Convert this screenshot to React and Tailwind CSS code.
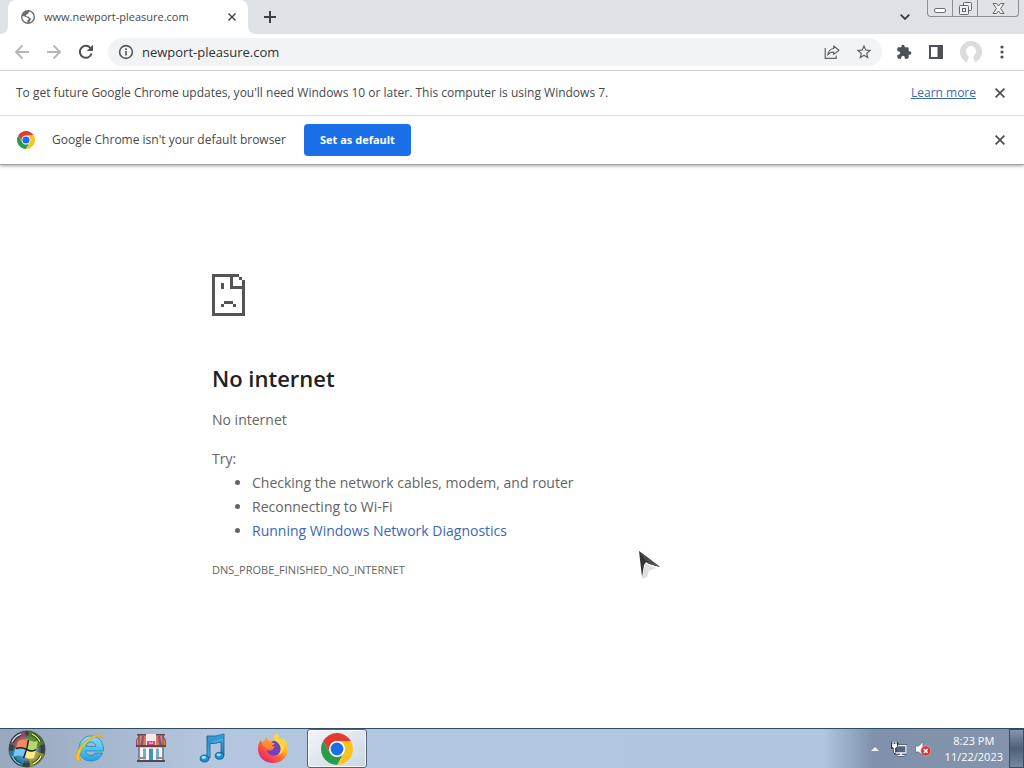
import React, { useState } from "react";

const ChromeLogo = ({ className }) => (
  <svg viewBox="4 4 40 40" className={className} aria-hidden="true">
    <circle cx="24" cy="24" r="11" fill="#fff" />
    <path d="M24 14H41.32A20 20 0 0 0 6.68 14L15.34 29A10 10 0 0 1 24 14z" fill="#e33b2e" />
    <path d="M15.34 29L6.68 14A20 20 0 0 0 24 44L32.66 29A10 10 0 0 1 15.34 29z" fill="#2a9b4b" />
    <path d="M32.66 29L24 44A20 20 0 0 0 41.32 14H24A10 10 0 0 1 32.66 29z" fill="#fcc31e" />
    <circle cx="24" cy="24" r="8" fill="#1a6fe8" />
  </svg>
);

const CloseIcon = ({ className }) => (
  <svg viewBox="0 0 10 10" className={className} fill="none" stroke="currentColor" strokeWidth="1.7" aria-hidden="true">
    <path d="M0.6 0.6L9.4 9.4M9.4 0.6L0.6 9.4" />
  </svg>
);

const GlobeIcon = () => (
  <svg viewBox="0 0 24 24" className="size-4 shrink-0" aria-hidden="true">
    <path
      fill="#6b6f73"
      d="M12 1.500a10.500 10.500 0 1 0 0 21 10.500 10.500 0 0 0 0-21zM10.900 20.200C6.800 19.700 3.700 16.200 3.700 12c0-.6.1-1 .2-1.500 2 .3 4 .8 5.500 2 1 .8 3 .5 3.600 2 .4 1.300-1.100 1.700-1.600 2.500-.5.900-.2 2-.5 3.200zM14 20c.2-1.500 1-2.500 2.200-3.500 1-1 .3-2.300-.7-2.800-1.500-.7-1.500-2-3-2.300-1.300-.3-2.700 0-3.500-1.200-.6-1.200 1-1.700 2-2.200 1.200-.6 1-2 2-2.800.5-.5 1.500-.6 2-1 3 1.300 5.300 4.300 5.300 7.800 0 4-2.700 7.200-6.300 8z"
    />
  </svg>
);

const BackIcon = () => (
  <svg viewBox="0 0 16 16" className="size-4" fill="none" stroke="#b4b7ba" strokeWidth="1.8" aria-hidden="true">
    <path d="M15 8H2M8.500 1.500L2 8l6.500 6.500" />
  </svg>
);

const ForwardIcon = () => (
  <svg viewBox="0 0 16 16" className="size-4" fill="none" stroke="#b4b7ba" strokeWidth="1.8" aria-hidden="true">
    <path d="M1 8h13M7.500 1.500L14 8l-6.500 6.500" />
  </svg>
);

const ReloadIcon = () => (
  <svg viewBox="0 0 16 16" className="size-4" aria-hidden="true">
    <path d="M13.600 9.500A6 6 0 1 1 12.400 3.900" fill="none" stroke="#4d5156" strokeWidth="2" />
    <path d="M15 0.800V7H8.800z" fill="#4d5156" />
  </svg>
);

const InfoIcon = () => (
  <svg viewBox="0 0 16 16" className="size-4 shrink-0" fill="none" stroke="#54585c" strokeWidth="1.6" aria-hidden="true">
    <circle cx="8" cy="8" r="6.400" />
    <path d="M8 7v4.600M8 4.300v1.700" />
  </svg>
);

const ShareIcon = () => (
  <svg viewBox="0 0 16 16" className="size-4" fill="none" stroke="#5f6368" strokeWidth="1.2" aria-hidden="true">
    <path d="M1.200 4v10.400h11V11.500" />
    <path d="M9.700 2l5.300 4.200-5.300 4.200V8C7 8 5.200 8.700 3.700 11 4.200 7.600 6 5 9.700 4.500z" strokeLinejoin="round" />
  </svg>
);

const StarIcon = () => (
  <svg viewBox="0 0 24 24" className="size-[18px]" fill="#5f6368" aria-hidden="true">
    <path d="M22 9.240l-7.190-.62L12 2 9.190 8.630 2 9.240l5.460 4.730L5.820 21 12 17.270 18.180 21l-1.630-7.030L22 9.240zM12 15.400l-3.760 2.270 1-4.280-3.320-2.880 4.380-.38L12 6.100l1.710 4.040 4.380.38-3.320 2.880 1 4.280L12 15.400z" />
  </svg>
);

const PuzzleIcon = () => (
  <svg viewBox="0 0 24 24" className="size-4" fill="#4d5156" aria-hidden="true">
    <path d="M20.500 11H19V7c0-1.100-.9-2-2-2h-4V3.500a2.500 2.500 0 0 0-5 0V5H4c-1.100 0-2 .9-2 2v3.800h1.500a2.700 2.700 0 0 1 0 5.400H2V20c0 1.100.9 2 2 2h3.800v-1.500a2.700 2.700 0 0 1 5.400 0V22H17c1.100 0 2-.9 2-2v-4h1.500a2.500 2.500 0 0 0 0-5z" />
  </svg>
);

const SidePanelIcon = () => (
  <svg viewBox="0 0 16 16" className="size-4" aria-hidden="true">
    <path fill="#4d5156" fillRule="evenodd" d="M1 1h14v14H1zM3 3v10h6.500V3z" />
  </svg>
);

const SadPageIcon = () => (
  <svg viewBox="0 0 11 14" className="h-[42px] w-[33px]" fill="#545454" shapeRendering="crispEdges" aria-hidden="true">
    <path d="M0 0H9V1H7V4H11V14H0zM1 1V13H10V5H6V1z" fillRule="evenodd" />
    <path d="M9 1h1v1H9zM10 2h1v3h-1z" />
    <path d="M3 3h1v2H3zM4 9h3v1H4zM3 10h1v1H3zM7 10h1v1H7z" />
  </svg>
);

const StartOrb = () => (
  <svg viewBox="0 0 40 40" className="size-10" aria-hidden="true">
    <defs>
      <radialGradient id="orb" cx="50%" cy="50%" r="50%">
        <stop offset="0" stopColor="#fffef0" />
        <stop offset="0.450" stopColor="#8faaa5" />
        <stop offset="0.800" stopColor="#2c4038" />
        <stop offset="1" stopColor="#3f4a56" />
      </radialGradient>
    </defs>
    <circle cx="20" cy="20" r="18.500" fill="url(#orb)" />
    <path d="M3 15A18 18 0 0 1 18 2L19 11 8 17z" fill="#b8506c" opacity="0.700" />
    <path d="M22 2a18 18 0 0 1 15 13l-8 3-8-8z" fill="#5f9420" opacity="0.700" />
    <path d="M2 22a18 18 0 0 0 13 15l4-8-9-8z" fill="#2a93d2" opacity="0.700" />
    <path d="M23 38a18 18 0 0 0 14-13l-9-3-6 7z" fill="#b8b030" opacity="0.700" />
    <path d="M5 13q3-6 9-8M25 5q6 3 8 8M5 27q3 6 8 8M26 35q6-3 8-8" fill="none" stroke="#14201c" strokeWidth="3" />
    <path d="M5 13q3-6 9-8" fill="none" stroke="#c8e6ea" strokeWidth="1.500" />
    <path d="M25 5q6 3 8 8" fill="none" stroke="#c4e86a" strokeWidth="1.500" />
    <path d="M5 27q3 6 8 8" fill="none" stroke="#6fd0f7" strokeWidth="1.500" />
    <path d="M26 35q6-3 8-8" fill="none" stroke="#f6f2a8" strokeWidth="1.500" />
    <path d="M11 12q5-3 10-1l-2 8q-5-2-10 0z" fill="#f08a58" />
    <path d="M22 11q5 3 9 1l-2 8q-4 2-9-1z" fill="#b4d86a" />
    <path d="M8 20q5-3 11 0l-2 8q-6-3-11 0z" fill="#79c6f2" />
    <path d="M20 21q5 3 9 0l-2 8q-5 2-9-1z" fill="#ffe985" />
    <path d="M21.500 11q-1 9-5 18M9 19.500q6-2 11 1t9 0" fill="none" stroke="#1b201c" strokeWidth="1.500" />
  </svg>
);

const ExplorerIcon = () => (
  <svg viewBox="0 0 32 32" className="size-8" aria-hidden="true">
    <defs>
      <linearGradient id="ie" x1="0" y1="0" x2="0" y2="1">
        <stop offset="0" stopColor="#8fe0fb" />
        <stop offset="0.5" stopColor="#4fc3f0" />
        <stop offset="1" stopColor="#2a9fdc" />
      </linearGradient>
    </defs>
    <path
      d="M17 4C10 4 5 9.500 5 17s5 12 12 12c5.500 0 9.800-3 11.500-8h-7.500c-1 1.500-2.200 2.300-4 2.300-3 0-5-1.800-5.200-4.300H29.500C30 10.500 25 4 17 4zM12 14.500c.5-2.700 2.400-4.500 5-4.500s4.600 1.800 4.900 4.500z"
      fill="url(#ie)"
      stroke="#2489bd"
      strokeWidth="0.800"
    />
    <path
      d="M28.500 6.500C29 1.500 22 1.500 15 6.500 7 12 1 21 2 27c.5 2 3.500 2.500 6 1-2.500 0-3.500-1.500-2.500-4.500C7 17 12 10.500 18 6.800c5-3 9-3.600 10.500-.3z"
      fill="#f4c52c"
      stroke="#c89a1c"
      strokeWidth="0.500"
    />
  </svg>
);

const StoreIcon = () => (
  <svg viewBox="0 0 32 32" className="size-8" aria-hidden="true">
    <path d="M4 13h24v15H4z" fill="#c3ccd6" />
    <path d="M2 2h28v1.500H2zM1 13h30v2H1z" fill="#5d4650" />
    <path d="M2 28h28v2H2z" fill="#4f4a52" />
    <path d="M4 3.500h7V13H1V8zM21 3.500h7L31 8v5H21z" fill="#8b4f86" />
    <path d="M5 4h2L5.500 13H2V8zM25 4h2l3 5v4h-3z" fill="#e08a45" />
    <path d="M9 4h2v9H8zM21 4h2l1 9h-3z" fill="#d77a52" />
    <path d="M11 2h10v11H11z" fill="#f3ebee" />
    <path d="M12 9h8v4h-8z" fill="#d1457c" />
    <path d="M14 9l2 2 2-2v3h-4z" fill="#f3a6c2" />
    <path d="M5 16h3v12H5zM11 16h3v12h-3zM18 16h3v12h-3zM24 16h3v12h-3z" fill="#f4f6f8" />
    <path d="M8 17h3v8H8zM21 17h3v8h-3z" fill="#7ba9c8" />
    <path d="M14 17h4v11h-4z" fill="#3f92c4" />
    <path d="M5 25h6v2H5zM21 25h6v2h-6z" fill="#8f8a8c" />
    <path d="M4 3v25M28 3v25" stroke="#5a4f5c" strokeWidth="1" />
  </svg>
);

const MusicIcon = () => (
  <svg viewBox="0 0 32 32" className="size-8" aria-hidden="true">
    <defs>
      <linearGradient id="note" x1="0" y1="0" x2="1" y2="1">
        <stop offset="0" stopColor="#1c7fbe" />
        <stop offset="0.5" stopColor="#46aee2" />
        <stop offset="1" stopColor="#1374b8" />
      </linearGradient>
    </defs>
    <path d="M11 4q9 1 17-2V23h-3V10q-6 2-11 1.500V26h-3z" fill="url(#note)" stroke="#12608f" strokeWidth="0.800" />
    <path d="M12 5q8 .8 15-1.500v3q-7 2.500-15 2z" fill="#2f9ad3" />
    <ellipse cx="8.500" cy="26.500" rx="4.300" ry="3.500" fill="#1d8fd2" stroke="#12557f" strokeWidth="0.800" />
    <ellipse cx="23.500" cy="23.800" rx="4.300" ry="3.500" fill="#1d8fd2" stroke="#12557f" strokeWidth="0.800" />
    <ellipse cx="7.800" cy="25.500" rx="2.200" ry="1.400" fill="#a6e6fb" />
    <ellipse cx="22.800" cy="22.800" rx="2.200" ry="1.400" fill="#a6e6fb" />
  </svg>
);

const FirefoxIcon = () => (
  <svg viewBox="0 0 32 32" className="size-8" aria-hidden="true">
    <defs>
      <linearGradient id="fox" x1="0.850" y1="0.100" x2="0.200" y2="0.900">
        <stop offset="0" stopColor="#ffe94a" />
        <stop offset="0.350" stopColor="#ffb02a" />
        <stop offset="0.650" stopColor="#ff5f3a" />
        <stop offset="1" stopColor="#e5296f" />
      </linearGradient>
    </defs>
    <path
      d="M20 1c1 3.500 3 5 5 7 1-.2 1-1 .8-2C29 9 31 13 31 17c0 8-6.500 14-15 14S1 25 1 17c0-4 1-7 3-9.500L5 11c1-1.500 2-2.200 3-2.500V5.500c1.500.5 3 1.500 4 3 2-.3 4 0 5 1C17 6 18 3 20 1z"
      fill="url(#fox)"
    />
    <path d="M17 9c4 0 7 3 7 7.500 0 4-3 7-7 7s-7-2.500-7-5.500c2 1 5 1 6-1 .5-1 1.500-1.500 2-2.500-1.500 0-3 0-4-1.500-.5-1.800 1-4 3-4z" fill="#6f3fc4" />
    <path d="M18 2c-3 4 1 7 3 9 4 4 3 9 0 12 7-2 8-10 4-14-3-2-6-3-7-7z" fill="#ffd83c" />
    <path d="M5 12c2-3 6-3.500 9-2 1.500 1 3 1 4 1-.5 2-3 2-4 3s0 2-1.500 3c-3 0-5-2-7.500-5z" fill="#ff8f30" />
  </svg>
);

const NetworkTrayIcon = () => (
  <svg viewBox="0 0 16 16" className="size-4" fill="none" aria-hidden="true">
    <path d="M6 4.500h9v7.500H4.500V8M10 12v2.500M6.500 14.500h7" stroke="#263648" strokeWidth="3" />
    <path d="M1.500 0.500v3M5.500 0.500v3M0.500 3.500h6v3h-6zM3.500 6v6" stroke="#263648" strokeWidth="2.500" />
    <path d="M5.500 5h9v7h-9z" fill="#52657d" />
    <path d="M7 4.500h8v7.500H4.500M10 12v2.500M6.500 14.500h7" stroke="#f5f8fb" strokeWidth="1.400" />
    <path d="M2 0.500v3M5 0.500v3M3.500 6v6" stroke="#f5f8fb" strokeWidth="1.300" />
    <path d="M1 3h5v2.500L4.500 7h-2L1 5.500z" fill="#f5f8fb" />
  </svg>
);

const VolumeTrayIcon = () => (
  <svg viewBox="0 0 16 16" className="size-4" aria-hidden="true">
    <path d="M0.500 5h3L8 0.800v14L3.500 11h-3z" fill="#f8f9fa" stroke="#4c5869" strokeWidth="0.600" />
    <circle cx="10.800" cy="10" r="5" fill="#cf3535" stroke="#f0b9b5" strokeWidth="0.600" />
    <path d="M8.800 8l4 4M12.800 8l-4 4" stroke="#fff" strokeWidth="1.600" />
  </svg>
);

const taskbarApps = [
  { name: "Internet Explorer", Icon: ExplorerIcon },
  { name: "Store", Icon: StoreIcon },
  { name: "Music", Icon: MusicIcon },
  { name: "Firefox", Icon: FirefoxIcon },
];

const TabStrip = () => (
  <header className="flex h-[34px] items-start bg-[#dee1e6] pl-2">
    <div className="relative flex h-[34px] w-60 items-center rounded-t-lg bg-white pr-3 pl-3">
      {/* Curved feet of the active tab */}
      <span className="absolute bottom-0 -left-2 size-2 bg-white">
        <span className="block size-2 rounded-br-lg bg-[#dee1e6]" />
      </span>
      <span className="absolute -right-2 bottom-0 size-2 bg-white">
        <span className="block size-2 rounded-bl-lg bg-[#dee1e6]" />
      </span>
      <GlobeIcon />
      <span className="ml-2 flex-1 truncate text-[11px] text-[#45494d]">www.newport-pleasure.com</span>
      <button aria-label="Close tab" className="text-[#3c4043]">
        <CloseIcon className="size-2" />
      </button>
    </div>
    <button aria-label="New tab" className="ml-2 flex h-[34px] w-7 items-center justify-center">
      <svg viewBox="0 0 12 12" className="size-3" stroke="#3c4043" strokeWidth="2" aria-hidden="true">
        <path d="M6 0v12M0 6h12" />
      </svg>
    </button>
    <button aria-label="Search tabs" className="ml-auto flex h-[34px] w-7 items-center justify-center">
      <svg viewBox="0 0 10 6" className="w-[10px]" fill="none" stroke="#3c4043" strokeWidth="1.800" aria-hidden="true">
        <path d="M0.700 0.700L5 5l4.300-4.300" />
      </svg>
    </button>
    <div className="mr-[5px] ml-2 flex h-[17px] rounded-b-[4px] border border-t-0 border-[#8a8e94] bg-[#dfe2e7]">
      <button aria-label="Minimize" className="flex w-[25px] items-end justify-center border-r border-[#8a8e94] pb-[3px]">
        <span className="h-[5px] w-3 rounded-[2px] border border-[#6b6f75] bg-white" />
      </button>
      <button aria-label="Restore" className="flex w-[25px] items-center justify-center border-r border-[#8a8e94]">
        <svg viewBox="0 0 13 13" className="size-[13px]" fill="#eef0f3" stroke="#63676d" aria-hidden="true">
          <rect x="4.500" y="0.500" width="8" height="8" rx="1" />
          <rect x="0.500" y="3.500" width="9" height="9" rx="1" />
          <rect x="3.500" y="6.500" width="3" height="3" />
        </svg>
      </button>
      <button aria-label="Close" className="flex w-10 items-center justify-center">
        <svg viewBox="0 0 13 11" className="h-[11px] w-[13px]" fill="#f4f5f7" stroke="#63676d" aria-hidden="true">
          <path d="M1 0.500h3.500l2 2.500 2-2.500H12L8.600 5.500 12 10.500H8.500l-2-2.500-2 2.500H1l3.400-5z" />
        </svg>
      </button>
    </div>
  </header>
);

const Toolbar = () => {
  const [url, setUrl] = useState("newport-pleasure.com");

  return (
    <div className="flex h-[37px] items-center border-b border-[#dadce0] bg-white pr-[14px]">
      <div className="flex items-center gap-4 pl-[14px]">
        <button aria-label="Back"><BackIcon /></button>
        <button aria-label="Forward"><ForwardIcon /></button>
        <button aria-label="Reload"><ReloadIcon /></button>
      </div>
      <div className="ml-[14px] flex h-7 flex-1 items-center rounded-full bg-[#f1f3f4] pr-[9px] pl-[10px]">
        <InfoIcon />
        <input
          aria-label="Address"
          value={url}
          onChange={(e) => setUrl(e.target.value)}
          className="ml-2 min-w-0 flex-1 bg-transparent pt-px text-[13px] text-[#2f3236] outline-none"
        />
        <div className="flex items-center gap-[15px]">
          <button aria-label="Share this page"><ShareIcon /></button>
          <button aria-label="Bookmark this page"><StarIcon /></button>
        </div>
      </div>
      <div className="ml-[14px] flex items-center gap-4">
        <button aria-label="Extensions"><PuzzleIcon /></button>
        <button aria-label="Side panel"><SidePanelIcon /></button>
        <div className="flex items-center gap-3">
          <button aria-label="Profile" className="flex size-[22px] items-end justify-center overflow-hidden rounded-full bg-[#dcdcdc]">
            <svg viewBox="0 0 22 22" className="size-[22px]" fill="#fff" aria-hidden="true">
              <path d="M11 5a5 5 0 0 1 5 5c0 2.500-1 4-2.500 5v2l2 5h-9l2-5v-2C7 14 6 12.500 6 10a5 5 0 0 1 5-5z" />
            </svg>
          </button>
          <button aria-label="Menu" className="flex w-4 justify-center">
            <svg viewBox="0 0 4 14" className="h-[14px] w-1" fill="#4d5156" aria-hidden="true">
              <circle cx="2" cy="2" r="1.600" />
              <circle cx="2" cy="7" r="1.600" />
              <circle cx="2" cy="12" r="1.600" />
            </svg>
          </button>
        </div>
      </div>
    </div>
  );
};

const InfoBars = () => (
  <div className="relative text-[12px] text-[#46494d] shadow-[0_1px_3px_rgba(0,0,0,0.35)]">
    <div className="flex h-[45px] items-center border-b border-[#dadce0] bg-white px-4">
      <p>To get future Google Chrome updates, you'll need Windows 10 or later. This computer is using Windows 7.</p>
      <a href="#learn" className="ml-auto text-[#3a6bb5] underline">Learn more</a>
      <button aria-label="Dismiss update notice" className="mr-[3px] ml-[19px] text-[#4a4d51]">
        <CloseIcon className="size-[10px]" />
      </button>
    </div>
    <div className="flex h-[49px] items-center border-b border-[#a0a2a5] bg-white px-4">
      <ChromeLogo className="ml-px size-[18px]" />
      <p className="ml-[17px]">Google Chrome isn't your default browser</p>
      <button className="ml-[18px] h-8 rounded-[4px] bg-[#1a6fe8] px-4 text-[11px] font-bold text-white">
        Set as default
      </button>
      <button aria-label="Dismiss default browser notice" className="mr-[3px] ml-auto text-[#4a4d51]">
        <CloseIcon className="size-[10px]" />
      </button>
    </div>
  </div>
);

const ErrorPage = () => (
  <main className="flex-1 bg-white">
    <div className="mx-auto max-w-[600px] pt-[109px] text-[14px] leading-6 text-[#646464]">
      <SadPageIcon />
      <h1 className="mt-12 text-[22px] leading-7 font-semibold text-[#202124]">No internet</h1>
      <p className="mt-4">No internet</p>
      <p className="mt-[15px]">Try:</p>
      <ul className="list-disc pl-10">
        <li>Checking the network cables, modem, and router</li>
        <li>Reconnecting to Wi-Fi</li>
        <li>
          <a href="#diagnostics" className="text-[#3a66b8]">Running Windows Network Diagnostics</a>
        </li>
      </ul>
      <p className="mt-[15px] text-[11px]">DNS_PROBE_FINISHED_NO_INTERNET</p>
    </div>
  </main>
);

const Taskbar = () => (
  <footer className="flex h-10 items-stretch border-t border-[#2f4a68] bg-linear-to-r from-[#98a8be] via-[#b3c6de] via-20% to-[#b0c5e0]">
    <button aria-label="Start" className="flex w-[60px] items-center overflow-hidden pl-[7px]">
      <StartOrb />
    </button>
    <nav className="flex gap-px">
      {taskbarApps.map(({ name, Icon }) => (
        <button key={name} aria-label={name} className="flex w-[60px] items-center justify-center pb-px">
          <Icon />
        </button>
      ))}
      <button
        aria-label="Google Chrome"
        className="ml-[3px] flex w-[60px] items-center justify-center rounded-[3px] border border-[#53647a] bg-linear-to-br from-[#f2f5f9] to-[#ccd7e4] inset-ring inset-ring-white/80"
      >
        <ChromeLogo className="size-8" />
      </button>
    </nav>
    <div className="ml-auto flex items-center bg-linear-to-r from-transparent via-[#8092ab] via-25% to-[#8394ab] pl-12">
      <button aria-label="Show hidden icons" className="mr-3">
        <svg viewBox="0 0 8 4" className="h-1 w-2" fill="#eef3f8" aria-hidden="true">
          <path d="M0 4l4-4 4 4z" />
        </svg>
      </button>
      <button aria-label="Network" className="mr-2"><NetworkTrayIcon /></button>
      <button aria-label="Volume" className="mr-[14px]"><VolumeTrayIcon /></button>
      <div className="text-center text-[11px] leading-4 text-white">
        <p>8:23 PM</p>
        <p>11/22/2023</p>
      </div>
      <button
        aria-label="Show desktop"
        className="ml-[6px] h-full w-[15px] border border-[#3d4c60] bg-linear-to-b from-[#8696ab] via-[#4d6078] to-[#76889f]"
      />
    </div>
  </footer>
);

const Cursor = () => (
  <svg viewBox="0 0 24 30" className="pointer-events-none absolute top-[550px] left-[638px] h-[30px] w-6" aria-hidden="true">
    <path d="M7 13l11 5-7 3-2 6-5 2z" fill="#000" opacity="0.120" />
    <path d="M1 1L22 17 10 13.500 8 12 6 15 4 27z" fill="#333" />
    <path d="M1 1L22 17l-9-2.500-6-5z" fill="#4f4f4f" />
  </svg>
);

const App = () => (
  <div className="relative flex min-h-screen flex-col overflow-hidden bg-white font-['Open_Sans',sans-serif]">
    <TabStrip />
    <Toolbar />
    <InfoBars />
    <ErrorPage />
    <Taskbar />
    <Cursor />
  </div>
);

export default App;
